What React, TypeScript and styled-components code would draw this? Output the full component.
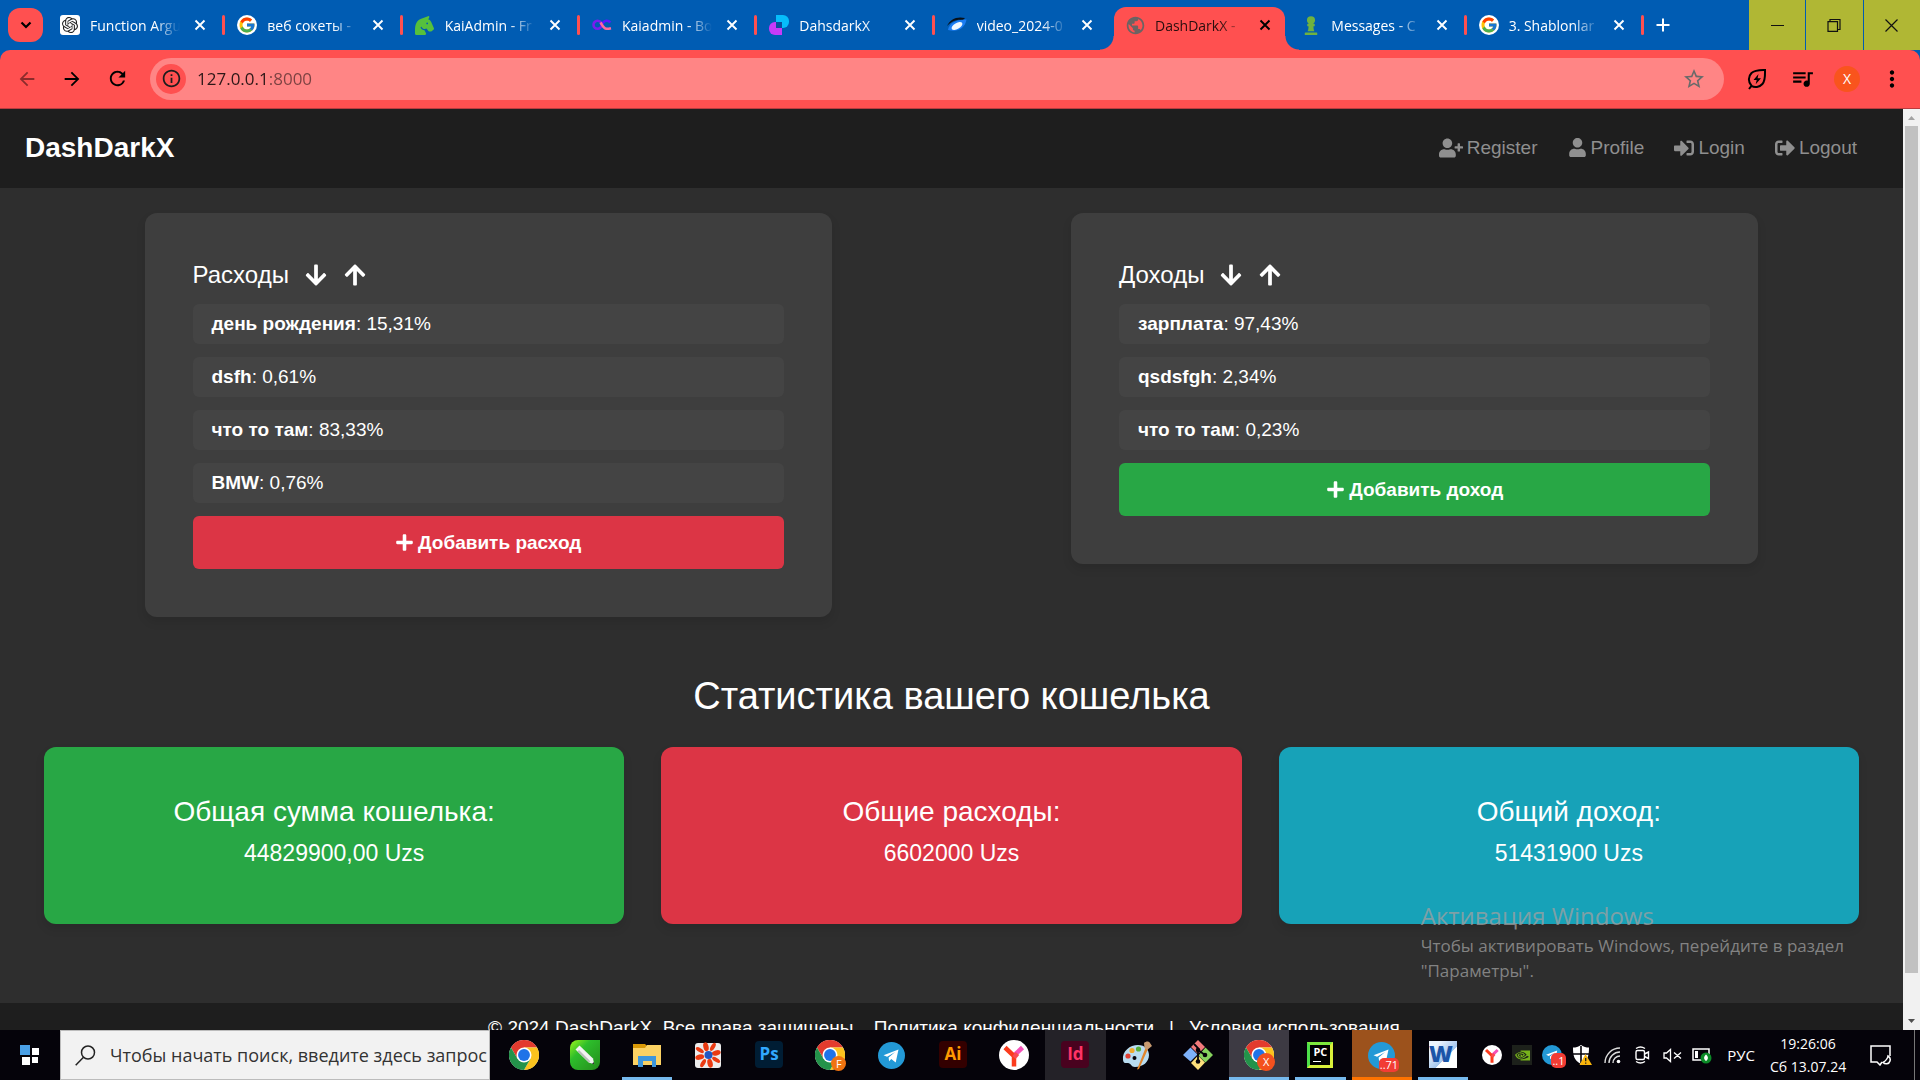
import React from "react";
import styled, { createGlobalStyle, css } from "styled-components";
import {
  FaArrowDown,
  FaArrowUp,
  FaPlus,
  FaSignInAlt,
  FaSignOutAlt,
  FaUser,
  FaUserPlus,
  FaChessPawn,
  FaHorseHead,
} from "react-icons/fa";
import { FcGoogle } from "react-icons/fc";
import { SiOpenai, SiNvidia } from "react-icons/si";
import {
  MdArrowBack,
  MdArrowForward,
  MdInfoOutline,
  MdMoreVert,
  MdPublic,
  MdQueueMusic,
  MdRefresh,
  MdStarOutline,
} from "react-icons/md";

const uiFont = `"Open Sans", "Noto Sans", sans-serif`;
const pageFont = `"Liberation Sans", Arial, sans-serif`;

const GlobalStyle = createGlobalStyle`
  *, *::before, *::after { box-sizing: border-box; }
  body { margin: 0; background: #2e2e2e; font-family: ${pageFont}; overflow: hidden; }
  button, input { font: inherit; }
  button { border: 0; padding: 0; margin: 0; background: none; color: inherit; cursor: pointer; }
  a { color: inherit; text-decoration: none; }
  h1, h2, h3, p, ul { margin: 0; padding: 0; font-weight: 400; }
  svg { display: block; flex: none; }
`;

const Desktop = styled.div`
  display: flex;
  flex-direction: column;
  height: 100vh;
`;

/* ---------- Browser window ---------- */

const TabStrip = styled.header`
  display: flex;
  flex: none;
  height: 50px;
  background: #005cb3;
  font-family: ${uiFont};
`;

const TabSearch = styled.button`
  display: grid;
  place-items: center;
  align-self: center;
  width: 35px;
  height: 34px;
  margin: 0 5px 0 8px;
  border-radius: 12px;
  background: #ff5050;
`;

const Tabs = styled.div`
  display: flex;
  flex: 0 1 1596px;
  min-width: 0;
`;

const Tab = styled.div<{ $active?: boolean; $divider?: boolean }>`
  position: relative;
  display: flex;
  flex: 1 1 0;
  min-width: 0;
  align-items: center;
  gap: 10px;
  padding: 0 15px 0 12px;
  color: #fff;
  font-size: 14px;

  ${(p) =>
    p.$divider &&
    css`
      &::after {
        content: "";
        position: absolute;
        right: 0;
        top: 15px;
        width: 3px;
        height: 20px;
        border-radius: 2px;
        background: #ff5050;
      }
    `}

  ${(p) =>
    p.$active &&
    css`
      margin: 7px 4px 0 2px;
      padding: 0 10px 7px 11px;
      border-radius: 12px 12px 0 0;
      background: #ff5050;
      color: #2a0e0e;
      &::before,
      &::after {
        content: "";
        position: absolute;
        bottom: 0;
        width: 14px;
        height: 14px;
      }
      &::before {
        right: 100%;
        background: radial-gradient(circle at 0 0, transparent 13px, #ff5050 14px);
      }
      &::after {
        left: 100%;
        background: radial-gradient(circle at 100% 0, transparent 13px, #ff5050 14px);
      }
    `}
`;

const Favicon = styled.span`
  display: grid;
  flex: none;
  place-items: center;
  width: 20px;
  height: 20px;
`;

const FavTile = styled(Favicon)<{ $round?: boolean }>`
  border-radius: ${(p) => (p.$round ? "50%" : "3px")};
  background: #fff;
  color: #222;
`;

const TabTitle = styled.span`
  flex: 1;
  min-width: 0;
  overflow: hidden;
  white-space: nowrap;
  mask-image: linear-gradient(to right, #000 72%, transparent 100%);
`;

const CloseTab = styled.button<{ $dark?: boolean }>`
  display: grid;
  place-items: center;
  flex: none;
  width: 20px;
  height: 20px;
  color: ${(p) => (p.$dark ? "#000" : "#fff")};
`;

const NewTab = styled.button`
  display: grid;
  place-items: center;
  width: 28px;
  margin-left: 5px;
  color: #fff;
`;

const WindowControls = styled.div`
  display: flex;
  gap: 1px;
  width: 171px;
  margin-left: auto;
`;

const WindowButton = styled.button`
  display: grid;
  flex: 1;
  place-items: center;
  background: #b0b734;
  color: #111;
`;

const ToolbarBack = styled.div`
  flex: none;
  background: #005cb3;
`;

const Toolbar = styled.div`
  display: flex;
  align-items: center;
  height: 59px;
  padding: 0 14px 1px 12px;
  border-bottom: 1px solid #b83c3f;
  border-radius: 10px 10px 0 0;
  background: #ff5050;
  font-family: ${uiFont};
`;

const ToolButton = styled.button<{ $faded?: boolean }>`
  display: grid;
  place-items: center;
  width: 30px;
  height: 30px;
  margin-right: 15px;
  color: #000;
  opacity: ${(p) => (p.$faded ? 0.45 : 1)};
`;

const AddressBar = styled.form`
  display: flex;
  flex: 1;
  align-items: center;
  height: 42px;
  margin-right: 18px;
  margin-left: 3px;
  padding: 0 18px 0 6px;
  border-radius: 21px;
  background: #ff8585;
`;

const SiteInfo = styled.button`
  display: grid;
  place-items: center;
  width: 30px;
  height: 30px;
  border-radius: 50%;
  background: #ff5050;
  color: #1d1d1d;
`;

const Url = styled.input`
  flex: 1;
  min-width: 0;
  padding: 0 0 0 11px;
  border: 0;
  outline: 0;
  background: linear-gradient(to right, #2d1717 82px, #7b4141 82px);
  background-clip: text;
  color: transparent;
  font-size: 17px;
  line-height: 30px;
`;

const Star = styled.button`
  color: #6a6a6a;
`;

const BrowserActions = styled.div`
  display: flex;
  align-items: center;
  gap: 17px;
`;

const ActionButton = styled.button`
  display: grid;
  place-items: center;
  width: 29px;
  height: 30px;
  color: #000;
`;

const Avatar = styled.button`
  width: 26px;
  height: 26px;
  border-radius: 50%;
  background: #f9541d;
  color: #fff;
  font-size: 14px;
`;

/* ---------- Site ---------- */

const Viewport = styled.div`
  position: relative;
  display: flex;
  flex: 1;
  min-height: 0;
`;

const Site = styled.div`
  flex: 1;
  min-width: 0;
  overflow: hidden;
  background: #2e2e2e;
  color: #fff;
`;

const ScrollTrack = styled.div`
  display: flex;
  flex: none;
  flex-direction: column;
  align-items: center;
  width: 17px;
  background: #f1f1f1;
`;

const ScrollArrow = styled.button<{ $down?: boolean }>`
  display: grid;
  flex: none;
  place-items: center;
  width: 17px;
  height: 17px;
  color: ${(p) => (p.$down ? "#505050" : "#a3a3a3")};
  rotate: ${(p) => (p.$down ? "180deg" : "0deg")};
`;

const ScrollThumb = styled.div`
  height: 92%;
  width: 13px;
  margin-bottom: auto;
  background: #c1c1c1;
`;

const Navbar = styled.nav`
  display: flex;
  align-items: center;
  justify-content: space-between;
  height: 79px;
  padding: 0 46px 2px 25px;
  background: #1e1e1e;
`;

const Brand = styled.a`
  font-size: 28px;
  font-weight: 700;
`;

const NavLinks = styled.div`
  display: flex;
  gap: 30px;
`;

const NavLink = styled.a`
  display: flex;
  align-items: center;
  gap: 4px;
  color: #8f8f8f;
  font-size: 19px;
`;

const Ledgers = styled.section`
  display: flex;
  align-items: flex-start;
  justify-content: space-around;
  padding: 25px 25px 0;
  min-height: 478px;
`;

const Card = styled.article`
  width: 37.1%;
  padding: 48px;
  border-radius: 12px;
  background: #3e3e3e;
  box-shadow: 0 5px 10px rgba(0, 0, 0, 0.1);
`;

const CardHead = styled.header`
  display: flex;
  align-items: center;
  gap: 15px;
  height: 29px;
  margin-bottom: 14px;
  padding-bottom: 2px;
`;

const CardTitle = styled.h2`
  font-size: 24px;
  line-height: 29px;
`;

const Entries = styled.ul`
  list-style: none;
`;

const Entry = styled.li`
  margin-bottom: 13px;
  padding: 9px 19px;
  border-radius: 6px;
  background: #444;
  font-size: 19px;
  line-height: 22px;
`;

const AddButton = styled.button<{ $color: string }>`
  display: flex;
  align-items: center;
  justify-content: center;
  gap: 4px;
  width: 100%;
  height: 53px;
  border-radius: 6px;
  background: ${(p) => p.$color};
  color: #fff;
  font-size: 19px;
  font-weight: 700;
`;

const Stats = styled.section`
  padding: 8px 44px 79px;
`;

const StatsTitle = styled.h1`
  margin-bottom: 28px;
  font-size: 38px;
  line-height: 45px;
  text-align: center;
`;

const StatGrid = styled.div`
  display: grid;
  grid-template-columns: repeat(3, 1fr);
  gap: 37px;
`;

const StatCard = styled.article<{ $color: string }>`
  padding: 48px;
  border-radius: 12px;
  background: ${(p) => p.$color};
  box-shadow: 0 5px 10px rgba(0, 0, 0, 0.1);
  text-align: center;
`;

const StatName = styled.h2`
  margin-bottom: 10px;
  font-size: 28px;
  line-height: 34px;
`;

const StatValue = styled.p`
  margin-bottom: 8px;
  font-size: 23px;
  line-height: 29px;
`;

const Footer = styled.footer`
  display: flex;
  justify-content: center;
  height: 80px;
  padding-top: 14px;
  background: #1e1e1e;
  font-size: 19px;
  line-height: 22px;
`;

const FooterLink = styled.a`
  margin: 0 15px;
`;

const Watermark = styled.aside`
  position: absolute;
  right: 76px;
  bottom: 47px;
  color: rgba(160, 160, 160, 0.75);
  font-family: ${uiFont};
  font-size: 17px;
  line-height: 25px;
  pointer-events: none;
`;

const WatermarkTitle = styled.p`
  font-size: 24px;
  line-height: 34px;
`;

/* ---------- Taskbar ---------- */

const Taskbar = styled.footer`
  display: flex;
  flex: none;
  height: 50px;
  background: #05030a;
  color: #fff;
  font-family: ${uiFont};
`;

const Start = styled.button`
  display: grid;
  place-items: center;
  width: 60px;
`;

const SearchBox = styled.label`
  display: flex;
  align-items: center;
  gap: 14px;
  width: 430px;
  padding: 0 0 0 14px;
  border: 1px solid #bcbcbc;
  background: #f2f2f2;
  color: #222;
`;

const SearchInput = styled.input`
  flex: 1;
  min-width: 0;
  padding: 0;
  border: 0;
  outline: 0;
  background: none;
  font-size: 18px;
  &::placeholder {
    color: #333;
    opacity: 1;
  }
`;

const Apps = styled.div`
  display: flex;
  flex: 0 1 979px;
  gap: 1px;
  margin-left: 4px;
`;

const AppButton = styled.button<{ $bg?: string; $line?: string; $inset?: number }>`
  position: relative;
  display: grid;
  flex: 1;
  place-items: center;
  background: ${(p) => p.$bg ?? "none"};
  ${(p) =>
    p.$line &&
    css`
      &::after {
        content: "";
        position: absolute;
        right: ${p.$inset ?? 0}px;
        bottom: 0;
        left: ${p.$inset ?? 0}px;
        height: 3px;
        background: ${p.$line};
      }
    `}
`;

const IconBox = styled.span`
  position: relative;
  display: grid;
  place-items: center;
`;

const Badge = styled.span<{ $color: string; $round?: boolean; $small?: boolean }>`
  position: absolute;
  right: ${(p) => (p.$round ? "-1px" : "-4px")};
  bottom: ${(p) => (p.$round ? "-1px" : "-3px")};
  min-width: ${(p) => (p.$small ? "15px" : "18px")};
  height: ${(p) => (p.$small ? "15px" : p.$round ? "18px" : "14px")};
  padding: 0 1px;
  border-radius: ${(p) => (p.$round ? "50%" : "5px")};
  background: ${(p) => p.$color};
  color: #fff;
  font-size: 11px;
  line-height: ${(p) => (p.$small ? "15px" : p.$round ? "18px" : "14px")};
  text-align: center;
`;

const Tile = styled.span<{ $bg: string; $fg: string }>`
  width: 28px;
  height: 27px;
  margin-bottom: 2px;
  border-radius: 4px;
  background: ${(p) => p.$bg};
  color: ${(p) => p.$fg};
  font-size: 17px;
  font-weight: 700;
  line-height: 25px;
  text-align: center;
`;

const Tray = styled.div`
  display: flex;
  align-items: center;
  gap: 10px;
  margin-left: auto;
  padding-right: 5px;
`;

const TrayButton = styled.button`
  display: grid;
  place-items: center;
  width: 20px;
  height: 24px;
  font-size: 15px;
`;

const Language = styled(TrayButton)`
  width: 38px;
`;

const ActionCenter = styled(TrayButton)`
  width: 48px;
`;

const Clock = styled.time`
  width: 76px;
  font-size: 14px;
  line-height: 23px;
  text-align: center;
  white-space: nowrap;
`;

const ShowDesktop = styled.button`
  width: 1px;
  height: 50px;
  background: #777;
`;

/* ---------- Drawings ---------- */

const Cross = () => (
  <svg width="12" height="12" viewBox="0 0 12 12" stroke="currentColor" strokeWidth="1.9">
    <path d="M1.5 1.5l9 9M10.5 1.5l-9 9" />
  </svg>
);

const ChromeLogo = ({ size = 30 }: { size?: number }) => (
  <svg width={size} height={size} viewBox="0 0 48 48">
    <circle cx="24" cy="24" r="24" fill="#fff" />
    <path d="M24 12h20.8A24 24 0 0 0 3.2 12l10.4 18z" fill="#e33b2e" />
    <path d="M34.4 30L24 48A24 24 0 0 0 44.8 12H24z" fill="#fcc31e" />
    <path d="M13.6 30L3.2 12A24 24 0 0 0 24 48l10.4-18z" fill="#23934a" />
    <circle cx="24" cy="24" r="12" fill="#fff" />
    <circle cx="24" cy="24" r="9.5" fill="#1f73e8" />
  </svg>
);

const TelegramLogo = ({ size = 27 }: { size?: number }) => (
  <svg width={size} height={size} viewBox="0 0 27 27">
    <circle cx="13.5" cy="13.5" r="13.5" fill="#2399d6" />
    <path d="M5.5 13.3L20.5 7.4l-2.8 13-4.4-3.3-2.2 2.2-.5-3.9 6.6-5.4-8.1 4.7z" fill="#fff" />
  </svg>
);

const YandexLogo = ({ size = 30 }: { size?: number }) => (
  <svg width={size} height={size} viewBox="0 0 30 30" fill="none" strokeWidth="4.500">
    <circle cx="15" cy="15" r="15" fill="#fff" />
    <path d="M15 15.500L23.500 7.500" stroke="#f551b8" />
    <path d="M6 7.500l9 8.500V26.500" stroke="#fb3b1d" />
    <path d="M15 17.500l3.500-4" stroke="#fa4a52" />
  </svg>
);

const InfinityLogo = () => (
  <svg width="20" height="12" viewBox="0 0 20 12" fill="none" strokeWidth="2.600">
    <circle cx="5.500" cy="5.800" r="4" stroke="#7a1cf0" />
    <path d="M9 7.500c1.200-2.800 2.700-5.700 5.600-5.700 1.600 0 2.900.7 3.700 1.700" stroke="#5a18ff" />
    <path d="M8.600 3.500c1.700 3 3 6.200 6 6.300 1.800 0 2.900-.2 4.400-.6" stroke="#ff6c9c" />
  </svg>
);

const DashLogo = () => (
  <svg width="20" height="20" viewBox="0 0 20 20">
    <path d="M7 0h7a6 6 0 0 1 6 6v1a6 6 0 0 1-6 6H7z" fill="#06bdfb" />
    <path d="M13 7v13H6a6 6 0 0 1-6-6v-1a6 6 0 0 1 6-6z" fill="#c73bf8" />
    <path d="M7 7h6v6H7z" fill="#0b4d9e" />
  </svg>
);

const VideoLogo = () => (
  <svg width="20" height="16" viewBox="0 0 20 16">
    <path d="M0 9C3 2 10-1 18 1l-2 2C9 2 4 5 0 9z" fill="#081018" />
    <path d="M1 13C2 6 9 2.500 19.500 2.500 18 11 11 15.500 1 13z" fill="#1b7df2" />
    <ellipse cx="10" cy="9" rx="6" ry="3" transform="rotate(-30 10 9)" fill="#eef8ff" />
  </svg>
);

const Leaf = () => (
  <svg width="20" height="22" viewBox="0 0 20 22" fill="none" stroke="currentColor" strokeWidth="2">
    <path d="M2 21l2.500-3.200M4.500 17.800C1 14 1 8.500 4.500 5 8 2 13 2.200 18 2c0 5 .6 10.500-2.600 14-3 3.400-7.900 4-10.900 1.800z" />
    <path d="M11.500 6L6.500 12h3.200l-1 4.200L14 10.300h-3.400z" fill="currentColor" stroke="none" />
  </svg>
);

const WindowsLogo = () => (
  <svg width="20" height="20" viewBox="0 0 20 20" fill="#fff">
    <path d="M0 0h10v10H0z" fill="#4aa0e6" />
    <path d="M12 3h7v7h-7zM2 12h8v8H2zM12 12h6v6h-6z" />
  </svg>
);

const Magnifier = () => (
  <svg width="21" height="21" viewBox="0 0 21 21" fill="none" stroke="currentColor" strokeWidth="1.500">
    <circle cx="13" cy="7.500" r="6.500" />
    <path d="M8.500 12.300L.7 20.200" />
  </svg>
);

const CorelLogo = () => (
  <svg width="30" height="30" viewBox="0 0 30 30">
    <defs>
      <linearGradient id="corel" x1="0" y1="0" x2="1" y2="1">
        <stop offset="0" stopColor="#9df51c" />
        <stop offset=".35" stopColor="#2dbd2b" />
        <stop offset="1" stopColor="#258c1c" />
      </linearGradient>
    </defs>
    <path d="M8 0h22v22a8 8 0 0 1-8 8H8a8 8 0 0 1-8-8V8a8 8 0 0 1 8-8z" fill="url(#corel)" />
    <path d="M5.500 9.500l4-4L23 18.500l1.200 5.700-5.500-1.600z" fill="#f2f2f2" />
    <path d="M7.500 11.500L19 22.600l1.300-1.300L9 10z" fill="#b9bdb9" />
    <path d="M22 24l2.200.2-.5-2.200z" fill="#333" />
  </svg>
);

const ExplorerLogo = () => (
  <svg width="28" height="24" viewBox="0 0 28 24">
    <path d="M0 1h12l2 2v3H0z" fill="#d99806" />
    <path d="M0 5h12l2-3h14v20H0z" fill="#fbd163" />
    <path d="M5 13h18v11h-4v-6h-9v6H5z" fill="#3d96dc" />
  </svg>
);

const FlowerLogo = () => (
  <svg width="28" height="28" viewBox="0 0 28 28">
    <rect x="1" y="2" width="26" height="25" rx="3" fill="#ececec" />
    <g fill="#ea3a12">
      {[0, 45, 90, 135, 180, 225, 270, 315].map((a, i) => (
        <ellipse
          key={a}
          cx="14"
          cy={i % 2 ? 4.5 : 5.5}
          rx={i % 2 ? 2 : 2.6}
          ry="4.500"
          transform={`rotate(${a - 14} 14 14)`}
        />
      ))}
    </g>
    <circle cx="14.500" cy="14" r="4" fill="#2057c4" />
  </svg>
);

const PaintLogo = () => (
  <svg width="30" height="29" viewBox="0 0 30 29">
    <path d="M1 19C0 10 8 4 16 4c7 0 11 5 11 10 0 7-6 12-14 12-4 0-4-4-7-4-2 0-4.600 1-5-3z" fill="#b9dcf0" />
    <circle cx="6" cy="15" r="2.600" fill="#e23f32" />
    <circle cx="10" cy="9.500" r="2.600" fill="#f0a92c" />
    <circle cx="16.500" cy="8" r="2.600" fill="#54ae3a" />
    <circle cx="12.500" cy="17" r="2" fill="#05030a" />
    <path d="M23.500 7l2.500 1-9 20-2 .5z" fill="#e1862d" />
    <path d="M22 2c2-2 5-2 6 0l2 3-5 4-2.500-2z" fill="#c79a70" />
  </svg>
);

const GitLogo = () => (
  <svg width="30" height="30" viewBox="0 0 30 30">
    <path d="M15 0l7 7-7 7-7-7z" fill="#f27a7c" />
    <path d="M7.500 7.500l7 7-7 7L0 15z" fill="#7eb1fa" />
    <path d="M22.500 7.500L30 15l-7.500 7.500-7-7z" fill="#86d35e" />
    <path d="M15 15.500l7 7L15 30l-7-7z" fill="#fde07c" />
    <path d="M11 4l4 4v14M15 10l7 5" fill="none" stroke="#05030a" strokeWidth="1.800" />
    <circle cx="15" cy="10" r="2.300" fill="#05030a" />
    <circle cx="15" cy="21.500" r="2.300" fill="#05030a" />
    <circle cx="22" cy="15" r="2.300" fill="#05030a" />
  </svg>
);

const PyFrame = styled.span`
  position: relative;
  width: 26px;
  height: 26px;
  border: 3px solid #d9f03a;
  border-top-color: #7de83d;
  border-left-color: #4ee04a;
  background: #000;
  color: #fff;
  font-size: 11px;
  font-weight: 700;
  line-height: 13px;
  text-align: center;
  &::after {
    content: "";
    position: absolute;
    bottom: 3px;
    left: 3px;
    width: 8px;
    height: 1px;
    background: #fff;
  }
`;

const WordTile = styled.span`
  width: 28px;
  height: 27px;
  margin-bottom: 2px;
  padding-right: 4px;
  background: linear-gradient(135deg, #eef5fd 20%, #a5c6ee 60%, #fff 62%);
  color: #1b55a8;
  font-size: 23px;
  font-weight: 800;
  line-height: 25px;
  text-align: center;
`;

const NvidiaTile = styled.span`
  display: grid;
  place-items: center;
  width: 20px;
  height: 20px;
  background: #1d211b;
  color: #77b31b;
`;

const Shield = () => (
  <svg width="20" height="20" viewBox="0 0 20 20">
    <path d="M9 0c3 2 5 2.500 8 2.500 0 8-1 13-8 16.500C2 15.500 1 10.500 1 2.500 4 2.500 6 2 9 0z" fill="#fff" />
    <path d="M9 1v17M1 9h16" stroke="#05030a" strokeWidth="1.600" />
    <path d="M13.500 9l6.500 11H7.500z" fill="#f9b50b" />
    <path d="M13.700 13v3.200M13.700 17.400v1.300" stroke="#222" strokeWidth="1.300" />
  </svg>
);

const Wifi = () => (
  <svg width="17" height="17" viewBox="0 0 17 17" fill="none" stroke="#ddd" strokeWidth="1.400">
    <path d="M1 16A15 15 0 0 1 16 1M5 16A11 11 0 0 1 16 5M9 16a7 7 0 0 1 7-7" />
    <circle cx="14.500" cy="14.500" r="1.800" fill="#fff" stroke="none" />
  </svg>
);

const Camera = () => (
  <svg width="16" height="18" viewBox="0 0 16 18" fill="none" stroke="#fff" strokeWidth="1.400">
    <rect x="2" y="4.500" width="8.500" height="9" rx="1.500" />
    <path d="M10.500 8l4-2v6.500l-4-2M2 2.500Q6.500-.5 11 2.500M2 15.500q4.500 3 9 0" />
  </svg>
);

const Muted = () => (
  <svg width="19" height="15" viewBox="0 0 19 15" fill="none" stroke="#fff" strokeWidth="1.300">
    <path d="M1 5h2.500L7.500 1.500v12L3.500 10H1zM11 4.500l7 6M18 4.500l-7 6" />
  </svg>
);

const Battery = () => (
  <svg width="20" height="18" viewBox="0 0 20 18">
    <path d="M1 3h16v11H1z" fill="none" stroke="#fff" strokeWidth="1.500" />
    <path d="M3 5h3v7H3z" fill="#fff" />
    <circle cx="14" cy="12" r="5.500" fill="#0b8a27" />
    <path d="M14 8.500c3 2.600 2 5 0 6.500-2-1.500-3-3.900 0-6.500z" fill="#fff" />
  </svg>
);

const Notifications = () => (
  <svg width="21" height="21" viewBox="0 0 21 21" fill="none" stroke="#fff" strokeWidth="1.500">
    <path d="M12 17l-2 3-3-3H1V1h19v10" />
    <path d="M18 11c-.5 3-2.500 5-5 6.500 2 2 6 2 7-1.500.6-2-.3-4-2-5z" />
  </svg>
);

const Triangle = () => (
  <svg width="7" height="4" viewBox="0 0 7 4" fill="currentColor">
    <path d="M3.500 0L7 4H0z" />
  </svg>
);

/* ---------- Data ---------- */

const tabs = [
  { title: "Function Argu", icon: <FavTile><SiOpenai size={16} /></FavTile> },
  { title: "веб сокеты -", icon: <FavTile $round><FcGoogle size={18} /></FavTile> },
  { title: "KaiAdmin - Fr", icon: <Favicon><FaHorseHead size={19} color="#56c03c" /></Favicon> },
  { title: "Kaiadmin - Bo", icon: <Favicon><InfinityLogo /></Favicon> },
  { title: "DahsdarkX", icon: <Favicon><DashLogo /></Favicon> },
  { title: "video_2024-0", icon: <Favicon><VideoLogo /></Favicon> },
  { title: "DashDarkX -", icon: <Favicon><MdPublic size={21} color="#6b6363" /></Favicon> },
  { title: "Messages - C", icon: <Favicon><FaChessPawn size={20} color="#6fb23f" /></Favicon> },
  { title: "3. Shablonlar", icon: <FavTile $round><FcGoogle size={18} /></FavTile> },
];
const activeTab = 6;

const navLinks = [
  { label: "Register", icon: <FaUserPlus size={24} /> },
  { label: "Profile", icon: <FaUser size={19} /> },
  { label: "Login", icon: <FaSignInAlt size={20} /> },
  { label: "Logout", icon: <FaSignOutAlt size={20} /> },
];

const ledgers = [
  {
    title: "Расходы",
    add: "Добавить расход",
    color: "#dc3545",
    items: [
      ["день рождения", "15,31%"],
      ["dsfh", "0,61%"],
      ["что то там", "83,33%"],
      ["BMW", "0,76%"],
    ],
  },
  {
    title: "Доходы",
    add: "Добавить доход",
    color: "#28a745",
    items: [
      ["зарплата", "97,43%"],
      ["qsdsfgh", "2,34%"],
      ["что то там", "0,23%"],
    ],
  },
];

const stats = [
  { name: "Общая сумма кошелька:", value: "44829900,00 Uzs", color: "#28a745" },
  { name: "Общие расходы:", value: "6602000 Uzs", color: "#dc3545" },
  { name: "Общий доход:", value: "51431900 Uzs", color: "#17a2b8" },
];

const blue = "#76b9ed";
const apps: { name: string; icon: React.ReactNode; bg?: string; line?: string; inset?: number }[] = [
  { name: "Chrome", icon: <ChromeLogo /> },
  { name: "CorelDRAW", icon: <CorelLogo /> },
  { name: "Explorer", icon: <ExplorerLogo />, line: blue, inset: 5 },
  { name: "Viewer", icon: <FlowerLogo /> },
  { name: "Photoshop", icon: <Tile $bg="#001d34" $fg="#31a8ff">Ps</Tile> },
  { name: "Chrome F", icon: <IconBox><ChromeLogo /><Badge $color="#f07310" $round $small>F</Badge></IconBox> },
  { name: "Telegram", icon: <TelegramLogo /> },
  { name: "Illustrator", icon: <Tile $bg="#330000" $fg="#ff9a00">Ai</Tile> },
  { name: "Yandex", icon: <YandexLogo /> },
  { name: "InDesign", icon: <Tile $bg="#49021f" $fg="#ff3366">Id</Tile>, bg: "#242228" },
  { name: "Paint", icon: <PaintLogo /> },
  { name: "Git", icon: <GitLogo /> },
  { name: "Chrome X", icon: <IconBox><ChromeLogo /><Badge $color="#f4511e" $round>X</Badge></IconBox>, bg: "#3d3a43", line: blue },
  { name: "PyCharm", icon: <PyFrame>PC</PyFrame>, line: blue, inset: 5 },
  { name: "Telegram chats", icon: <IconBox><TelegramLogo /><Badge $color="#f23c34">..71</Badge></IconBox>, bg: "#9c521c", line: "#ff7300" },
  { name: "Word", icon: <WordTile>W</WordTile>, line: blue, inset: 5 },
];

/* ---------- App ---------- */

export default function App() {
  return (
    <Desktop>
      <GlobalStyle />
      <TabStrip>
        <TabSearch aria-label="Search tabs">
          <svg width="12" height="8" viewBox="0 0 12 8" fill="none" stroke="#000" strokeWidth="2.200">
            <path d="M1.500 1.500L6 6l4.500-4.500" />
          </svg>
        </TabSearch>
        <Tabs>
          {tabs.map((tab, i) => (
            <Tab key={i} $active={i === activeTab} $divider={i !== activeTab && i !== activeTab - 1}>
              {tab.icon}
              <TabTitle>{tab.title}</TabTitle>
              <CloseTab $dark={i === activeTab} aria-label="Close tab">
                <Cross />
              </CloseTab>
            </Tab>
          ))}
        </Tabs>
        <NewTab aria-label="New tab">
          <svg width="14" height="14" viewBox="0 0 14 14" stroke="currentColor" strokeWidth="2">
            <path d="M7 .5v13M.5 7h13" />
          </svg>
        </NewTab>
        <WindowControls>
          <WindowButton aria-label="Minimize">
            <svg width="13" height="13" viewBox="0 0 13 13" stroke="currentColor">
              <path d="M0 6.500h13" />
            </svg>
          </WindowButton>
          <WindowButton aria-label="Restore">
            <svg width="14" height="13" viewBox="0 0 14 13" fill="none" stroke="currentColor" strokeWidth="1.200">
              <path d="M1 2.600h9.500v9.800H1zM3 2.500v-2h10v10h-2.500" />
            </svg>
          </WindowButton>
          <WindowButton aria-label="Close">
            <svg width="13" height="13" viewBox="0 0 13 13" stroke="currentColor" strokeWidth="1.200">
              <path d="M.5.5l12 12M12.500.5l-12 12" />
            </svg>
          </WindowButton>
        </WindowControls>
      </TabStrip>
      <ToolbarBack>
        <Toolbar>
          <ToolButton $faded aria-label="Back"><MdArrowBack size={22} /></ToolButton>
          <ToolButton aria-label="Forward"><MdArrowForward size={22} /></ToolButton>
          <ToolButton aria-label="Reload"><MdRefresh size={23} /></ToolButton>
          <AddressBar>
            <SiteInfo type="button" aria-label="Site information"><MdInfoOutline size={21} /></SiteInfo>
            <Url aria-label="Address" defaultValue="127.0.0.1:8000" />
            <Star type="button" aria-label="Bookmark"><MdStarOutline size={24} /></Star>
          </AddressBar>
          <BrowserActions>
            <ActionButton aria-label="Energy saver"><Leaf /></ActionButton>
            <ActionButton aria-label="Media"><MdQueueMusic size={25} /></ActionButton>
            <Avatar>X</Avatar>
            <ActionButton aria-label="Menu"><MdMoreVert size={26} /></ActionButton>
          </BrowserActions>
        </Toolbar>
      </ToolbarBack>

      <Viewport>
        <Site>
          <Navbar>
            <Brand href="#">DashDarkX</Brand>
            <NavLinks>
              {navLinks.map((l) => (
                <NavLink key={l.label} href="#">
                  {l.icon}
                  {l.label}
                </NavLink>
              ))}
            </NavLinks>
          </Navbar>
          <Ledgers>
            {ledgers.map((ledger) => (
              <Card key={ledger.title}>
                <CardHead>
                  <CardTitle>{ledger.title}</CardTitle>
                  <button aria-label="По убыванию"><FaArrowDown size={24} /></button>
                  <button aria-label="По возрастанию"><FaArrowUp size={24} /></button>
                </CardHead>
                <Entries>
                  {ledger.items.map(([name, value]) => (
                    <Entry key={name}>
                      <strong>{name}</strong>: {value}
                    </Entry>
                  ))}
                </Entries>
                <AddButton $color={ledger.color}>
                  <FaPlus size={19} />
                  {ledger.add}
                </AddButton>
              </Card>
            ))}
          </Ledgers>
          <Stats>
            <StatsTitle>Статистика вашего кошелька</StatsTitle>
            <StatGrid>
              {stats.map((s) => (
                <StatCard key={s.name} $color={s.color}>
                  <StatName>{s.name}</StatName>
                  <StatValue>{s.value}</StatValue>
                </StatCard>
              ))}
            </StatGrid>
          </Stats>
          <Footer>
            <span>© 2024 DashDarkX. Все права защищены.</span>
            <FooterLink href="#">Политика конфиденциальности</FooterLink>
            <span>|</span>
            <FooterLink href="#">Условия использования</FooterLink>
          </Footer>
        </Site>
        <ScrollTrack>
          <ScrollArrow aria-label="Scroll up"><Triangle /></ScrollArrow>
          <ScrollThumb />
          <ScrollArrow $down aria-label="Scroll down"><Triangle /></ScrollArrow>
        </ScrollTrack>
        <Watermark>
          <WatermarkTitle>Активация Windows</WatermarkTitle>
          <p>
            Чтобы активировать Windows, перейдите в раздел
            <br />
            "Параметры".
          </p>
        </Watermark>
      </Viewport>

      <Taskbar>
        <Start aria-label="Start"><WindowsLogo /></Start>
        <SearchBox>
          <Magnifier />
          <SearchInput placeholder="Чтобы начать поиск, введите здесь запрос" />
        </SearchBox>
        <Apps>
          {apps.map((a) => (
            <AppButton key={a.name} $bg={a.bg} $line={a.line} $inset={a.inset} aria-label={a.name}>
              {a.icon}
            </AppButton>
          ))}
        </Apps>
        <Tray>
          <TrayButton aria-label="Yandex"><YandexLogo size={20} /></TrayButton>
          <TrayButton aria-label="NVIDIA"><NvidiaTile><SiNvidia size={15} /></NvidiaTile></TrayButton>
          <TrayButton aria-label="Telegram">
            <IconBox><TelegramLogo size={20} /><Badge $color="#f23c34" $small>..1</Badge></IconBox>
          </TrayButton>
          <TrayButton aria-label="Security"><Shield /></TrayButton>
          <TrayButton aria-label="Network"><Wifi /></TrayButton>
          <TrayButton aria-label="Camera"><Camera /></TrayButton>
          <TrayButton aria-label="Sound"><Muted /></TrayButton>
          <TrayButton aria-label="Battery"><Battery /></TrayButton>
          <Language>РУС</Language>
          <Clock>
            19:26:06
            <br />
            Сб 13.07.24
          </Clock>
          <ActionCenter aria-label="Notifications"><Notifications /></ActionCenter>
          <ShowDesktop aria-label="Show desktop" />
        </Tray>
      </Taskbar>
    </Desktop>
  );
}
